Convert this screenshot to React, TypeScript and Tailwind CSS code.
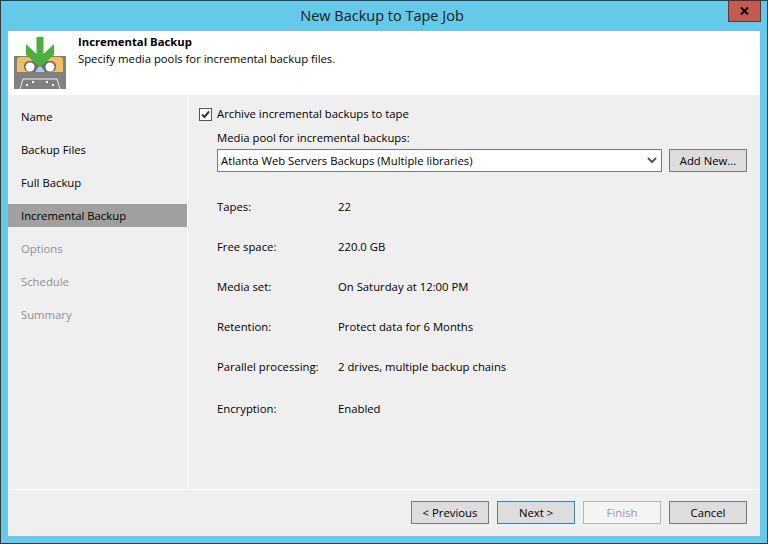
const navItems = [
  { label: 'Name', state: 'done' },
  { label: 'Backup Files', state: 'done' },
  { label: 'Full Backup', state: 'done' },
  { label: 'Incremental Backup', state: 'active' },
  { label: 'Options', state: 'off' },
  { label: 'Schedule', state: 'off' },
  { label: 'Summary', state: 'off' },
]

const details = [
  { label: 'Tapes:', value: '22', height: 'h-10' },
  { label: 'Free space:', value: '220.0 GB', height: 'h-10' },
  { label: 'Media set:', value: 'On Saturday at 12:00 PM', height: 'h-10' },
  { label: 'Retention:', value: 'Protect data for 6 Months', height: 'h-10' },
  { label: 'Parallel processing:', value: '2 drives, multiple backup chains', height: 'h-10' },
  { label: 'Encryption:', value: 'Enabled', height: 'h-11' },
]

function TapeIcon() {
  return (
    <svg width="52" height="52" viewBox="0 0 52 52" className="shrink-0">
      <rect x="0" y="19" width="52" height="33" fill="#808080" />
      <path d="M5 20 H47 L49 22 V35 H3 V22 Z" fill="#f0bf62" />
      <rect x="10" y="24" width="32" height="11" rx="5" fill="#6e6e6e" />
      <circle cx="16" cy="30" r="4.5" fill="#ffffff" />
      <circle cx="36" cy="30" r="4.5" fill="#ffffff" />
      <path d="M21 35 L26 28 L31 35 Z" fill="#a9cbe8" />
      <path d="M6 52 L9 42 H43 L46 52" fill="#808080" stroke="#e8e8e8" strokeWidth="1" />
      <rect x="12" y="47" width="2" height="2" fill="#ffffff" />
      <rect x="18" y="44" width="2" height="2" fill="#ffffff" />
      <rect x="32" y="44" width="2" height="2" fill="#ffffff" />
      <rect x="38" y="47" width="2" height="2" fill="#ffffff" />
      <path d="M22.5 0 H29.5 V17 L40 7 V18 L26 30 L12 18 V7 L22.5 17 Z" fill="#4cae3c" />
    </svg>
  )
}

function Button({ label, kind = 'normal' }: { label: string; kind?: 'normal' | 'focus' | 'disabled' }) {
  const styles = {
    normal: 'border-[#7a7a7a] bg-[#dddddd] text-black',
    focus: 'border-[#3c7fb1] bg-[#dddddd] text-black',
    disabled: 'border-[#b5b5b5] bg-[#f4f4f4] text-[#9a9a9a]',
  }
  return (
    <div className={`flex h-[23px] w-[78px] items-center justify-center border-[1px] ${styles[kind]}`}>
      {label}
    </div>
  )
}

export default function App() {
  return (
    <div className="flex h-[544px] w-[768px] flex-col overflow-hidden border border-[#33383c] bg-[#65c9ea] font-['Open_Sans','Noto_Sans',sans-serif] text-[11.3px] leading-4 text-black">
      {/* Title bar */}
      <div className="relative flex h-[30px] shrink-0 items-center justify-center pr-[4px]">
        <span className="text-[14.5px] text-[#1a1a1a]">New Backup to Tape Job</span>
        <div className="absolute right-[6px] top-0 flex h-[21px] w-[33px] items-center justify-center border border-[#5c3a38] border-t-0 bg-[#c25c52]">
          <svg width="9" height="8" viewBox="0 0 9 8">
            <path d="M1 0.5 L8 7.5 M8 0.5 L1 7.5" stroke="#000000" strokeWidth="2" fill="none" />
          </svg>
        </div>
      </div>

      <div className="mx-[7px] mb-[7px] flex min-h-0 flex-1 flex-col bg-[#efefef]">
        {/* Header */}
        <div className="flex h-[64px] shrink-0 gap-3 bg-white pl-[6px] pt-[6px]">
          <TapeIcon />
          <div className="-mt-[3px]">
            <div className="font-bold">Incremental Backup</div>
            <div className="mt-px">Specify media pools for incremental backup files.</div>
          </div>
        </div>

        {/* Body */}
        <div className="flex min-h-0 flex-1">
          <div className="flex w-[179px] shrink-0 flex-col gap-[10px] pt-[10px]">
            {navItems.map((item) => (
              <div
                key={item.label}
                className={`flex h-[23px] items-center pl-[13px] ${
                  item.state === 'active' ? 'bg-[#a0a0a0]' : item.state === 'off' ? 'text-[#8f8f8f]' : ''
                }`}
              >
                {item.label}
              </div>
            ))}
          </div>
          <div className="w-[1px] shrink-0 bg-white" />
          <div className="flex min-w-0 flex-1 flex-col pl-[11px] pr-[13px] pt-[11px]">
            <div className="flex h-4 items-center gap-[5px]">
              <div className="flex h-[13px] w-[13px] items-center justify-center border border-[#555555] bg-white">
                <svg width="11" height="11" viewBox="0 0 11 11">
                  <path d="M2 5.5 L4.5 8 L9 2.5" stroke="#333333" strokeWidth="2" fill="none" />
                </svg>
              </div>
              <span>Archive incremental backups to tape</span>
            </div>
            <div className="mt-[8px] pl-[18px]">
              <div>Media pool for incremental backups:</div>
              <div className="mt-[3px] flex items-center gap-[7px]">
                <div className="flex h-[23px] flex-1 items-center justify-between border border-[#7a7a7a] bg-white pl-[3px] pr-[4px]">
                  <span>Atlanta Web Servers Backups (Multiple libraries)</span>
                  <svg width="10" height="7" viewBox="0 0 10 7">
                    <path d="M1 1 L5 5 L9 1" stroke="#555555" strokeWidth="2" fill="none" />
                  </svg>
                </div>
                <Button label="Add New..." />
              </div>
              <div className="mt-[15px] flex flex-col">
                {details.map((row) => (
                  <div key={row.label} className={`flex ${row.height} items-center`}>
                    <span className="w-[121px] shrink-0">{row.label}</span>
                    <span>{row.value}</span>
                  </div>
                ))}
              </div>
            </div>
          </div>
        </div>

        {/* Footer */}
        <div className="flex h-[47px] shrink-0 items-start justify-end gap-2 border-t border-white pr-[13px] pt-[11px]">
          <Button label="< Previous" />
          <Button label="Next >" kind="focus" />
          <Button label="Finish" kind="disabled" />
          <Button label="Cancel" />
        </div>
      </div>
    </div>
  )
}
